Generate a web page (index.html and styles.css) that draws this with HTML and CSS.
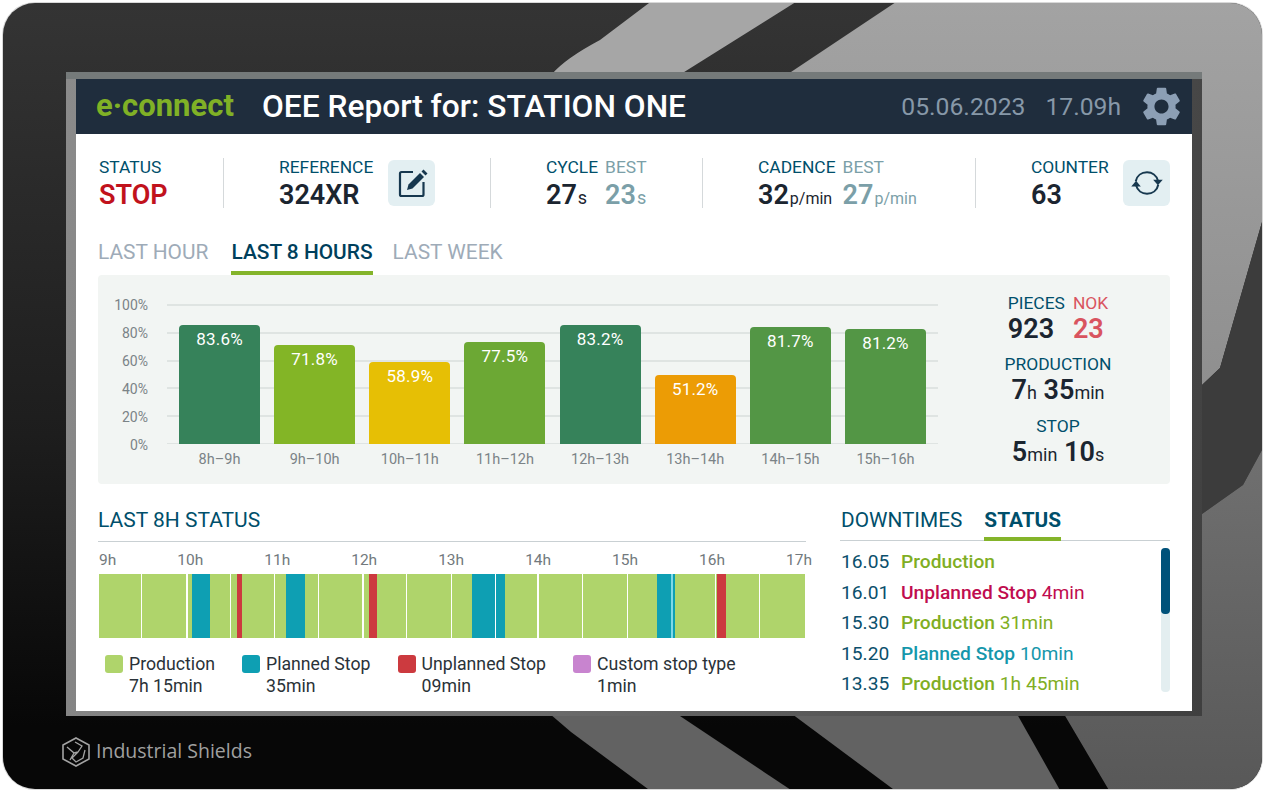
FILE: index.html
```html
<!DOCTYPE html>
<html lang="en">
<head>
    <meta charset="UTF-8">
    <meta name="viewport" content="width=device-width, initial-scale=1.0">
    <title>OEE Report</title>
    <link rel="stylesheet" href="styles.css">
</head>
<body>

<div class="device">
    <!-- panel casing with the reflections -->
    <svg class="casing" width="1266" height="791" viewBox="0 0 1266 791">
        <defs>
            <clipPath id="caseClip"><rect x="3" y="3" width="1259" height="786" rx="32"/></clipPath>
            <linearGradient id="caseDark" x1="0" y1="0" x2="0" y2="1">
                <stop offset="0" stop-color="#343434"/>
                <stop offset="0.55" stop-color="#1d1d1d"/>
                <stop offset="0.92" stop-color="#070707"/>
            </linearGradient>
            <linearGradient id="caseLight" x1="0" y1="0" x2="0" y2="1">
                <stop offset="0" stop-color="#a3a3a3"/>
                <stop offset="1" stop-color="#8f8f8f"/>
            </linearGradient>
            <linearGradient id="caseLow" x1="0" y1="0" x2="0" y2="1">
                <stop offset="0" stop-color="#707070"/>
                <stop offset="1" stop-color="#585858"/>
            </linearGradient>
        </defs>
        <rect x="2" y="2" width="1261" height="788" rx="33" fill="#d8d8d8"/>
        <g clip-path="url(#caseClip)">
            <rect x="3" y="3" width="1259" height="786" fill="url(#caseDark)"/>
            <path d="M653 0 L600 40 Q566 58 552 74 L681 74 L799 0Z" fill="#a6a6a6"/>
            <path d="M899 0 L788 74 L1202 74 L1202 385 L1220 368 L1262 222 L1262 0Z" fill="url(#caseLight)"/>
            <path d="M1202 385 L1220 368 L1262 222 L1262 450 L1243 485 L1202 514Z" fill="#3c3c3c"/>
            <path d="M1202 514 L1243 485 L1262 450 L1262 792 L1110 792 L1064 714 L1202 714Z" fill="url(#caseLow)"/>
            <path d="M1017 714 L792 714 L897 792 L1061 792Z" fill="#626262"/>
            <path d="M550 714 L677 714 L794 792 L652 792 L571 732Z" fill="#626262"/>
        </g>
        <path d="M76 738 L89 745 L89 759 L76 766 L63 759 L63 745Z" fill="none" stroke="#a3a3a3" stroke-width="1.6"/>
        <path d="M67 747 L74 753 L70 760 M75 742 L82 746 L78 752 L74 753 M85 750 L83 758 L76 762 L72 758 L78 752" fill="none" stroke="#a3a3a3" stroke-width="1.3"/>
    </svg>

    <div class="bezel">
        <div class="screen">

            <header class="topbar">
                <span class="brand">e·connect</span>
                <h1 class="title">OEE Report for: STATION ONE</h1>
                <div class="clock">
                    <span>05.06.2023</span>
                    <span>17.09h</span>
                    <svg class="gear" width="47" height="47" viewBox="0 0 24 24"><path fill="#8c9fb5" d="M19.14 12.94c.04-.3.06-.61.06-.94 0-.32-.02-.64-.07-.94l2.03-1.58c.18-.14.23-.41.12-.61l-1.92-3.32c-.12-.22-.37-.29-.59-.22l-2.39.96c-.5-.38-1.03-.7-1.62-.94l-.36-2.54c-.04-.24-.24-.41-.48-.41h-3.84c-.24 0-.43.17-.47.41l-.36 2.54c-.59.24-1.13.57-1.62.94l-2.39-.96c-.22-.08-.47 0-.59.22L2.74 8.87c-.12.21-.08.47.12.61l2.03 1.58c-.05.3-.09.63-.09.94s.02.64.07.94l-2.03 1.58c-.18.14-.23.41-.12.61l1.92 3.32c.12.22.37.29.59.22l2.39-.96c.5.38 1.03.7 1.62.94l.36 2.54c.05.24.24.41.48.41h3.84c.24 0 .44-.17.47-.41l.36-2.54c.59-.24 1.13-.56 1.62-.94l2.39.96c.22.08.47 0 .59-.22l1.92-3.32c.12-.22.07-.47-.12-.61l-2.01-1.58zM12 15.6c-1.98 0-3.6-1.62-3.6-3.6s1.62-3.6 3.6-3.6 3.6 1.62 3.6 3.6-1.62 3.6-3.6 3.6z"/></svg>
                </div>
            </header>

            <section class="stats">
                <div class="stat stat-status">
                    <div class="stat-label">STATUS</div>
                    <div class="stat-value stop">STOP</div>
                </div>
                <div class="stat stat-ref">
                    <div>
                        <div class="stat-label">REFERENCE</div>
                        <div class="stat-value">324XR</div>
                    </div>
                    <button class="icon-btn">
                        <svg width="32" height="32" viewBox="0 0 32 32" fill="none" stroke="#17384f" stroke-width="2.2"><path d="M17 5H5.500a1.500 1.500 0 0 0-1.500 1.500V27.500a1.500 1.500 0 0 0 1.500 1.500H26a1.500 1.500 0 0 0 1.500-1.500V15"/><path d="M11 23L12.500 17.500 24 6l4 4-11.500 11.500z" fill="#17384f" stroke="none"/><path d="M25.500 4.500l2-2 4 4-2 2z" fill="#17384f" stroke="none"/></svg>
                    </button>
                </div>
                <div class="stat stat-cycle">
                    <div class="pair">
                        <div>
                            <div class="stat-label">CYCLE</div>
                            <div class="stat-value">27<small>s</small></div>
                        </div>
                        <div class="best">
                            <div class="stat-label">BEST</div>
                            <div class="stat-value">23<small>s</small></div>
                        </div>
                    </div>
                </div>
                <div class="stat stat-cadence">
                    <div class="pair">
                        <div>
                            <div class="stat-label">CADENCE</div>
                            <div class="stat-value">32<small class="rate">p/min</small></div>
                        </div>
                        <div class="best">
                            <div class="stat-label">BEST</div>
                            <div class="stat-value">27<small class="rate">p/min</small></div>
                        </div>
                    </div>
                </div>
                <div class="stat stat-counter">
                    <div>
                        <div class="stat-label">COUNTER</div>
                        <div class="stat-value">63</div>
                    </div>
                    <button class="icon-btn">
                        <svg width="36" height="36" viewBox="0 0 32 32" fill="none" stroke="#17384f" stroke-width="1.8"><path d="M6 14.500C7 9.500 11 6.500 16 6.500c4.500 0 8.500 2.800 9.700 7.500"/><path d="M26 17.500C25 22.500 21 25.500 16 25.500c-4.500 0-8.500-2.800-9.700-7.500"/><path d="M21.500 13h8.500l-4.300 5z" fill="#17384f" stroke="none"/><path d="M2 19h8.500l-4.200-5z" fill="#17384f" stroke="none"/></svg>
                    </button>
                </div>
            </section>

            <nav class="tabs">
                <span class="tab">LAST HOUR</span>
                <span class="tab active">LAST 8 HOURS</span>
                <span class="tab">LAST WEEK</span>
            </nav>

            <section class="panel">
                <div class="chart">
                    <div class="y-axis">
                        <span>100%</span><span>80%</span><span>60%</span><span>40%</span><span>20%</span><span>0%</span>
                    </div>
                    <div class="plot">
                        <div class="bar dark-green" style="height:119px">83.6%</div>
                        <div class="bar lime" style="height:99px">71.8%</div>
                        <div class="bar yellow" style="height:82px">58.9%</div>
                        <div class="bar grass" style="height:102px">77.5%</div>
                        <div class="bar dark-green" style="height:119px">83.2%</div>
                        <div class="bar orange" style="height:69px">51.2%</div>
                        <div class="bar green" style="height:117px">81.7%</div>
                        <div class="bar green" style="height:115px">81.2%</div>
                    </div>
                    <div class="x-axis">
                        <span>8h–9h</span><span>9h–10h</span><span>10h–11h</span><span>11h–12h</span><span>12h–13h</span><span>13h–14h</span><span>14h–15h</span><span>15h–16h</span>
                    </div>
                </div>
                <div class="summary">
                    <div class="pair-center">
                        <div>
                            <div class="sum-label">PIECES</div>
                            <div class="sum-value">923</div>
                        </div>
                        <div class="nok">
                            <div class="sum-label">NOK</div>
                            <div class="sum-value">23</div>
                        </div>
                    </div>
                    <div class="sum-label spaced">PRODUCTION</div>
                    <div class="sum-value">7<small>h</small> 35<small>min</small></div>
                    <div class="sum-label spaced-stop">STOP</div>
                    <div class="sum-value">5<small>min</small> 10<small>s</small></div>
                </div>
            </section>

            <section class="lower">
                <div class="history">
                    <h2 class="history-title">LAST 8H STATUS</h2>
                    <div class="hours">
                        <span>9h</span><span>10h</span><span>11h</span><span>12h</span><span>13h</span><span>14h</span><span>15h</span><span>16h</span><span class="last-hour">17h</span>
                    </div>
                    <div class="timeline">
                        <i class="prod cut" style="width:43px"></i>
                        <i class="prod cut wide" style="width:45.6px"></i>
                        <i class="prod" style="width:4.7px"></i>
                        <i class="plan" style="width:18px"></i>
                        <i class="prod cut" style="width:20.7px"></i>
                        <i class="prod" style="width:5.7px"></i>
                        <i class="unpl" style="width:5.6px"></i>
                        <i class="prod cut" style="width:32.7px"></i>
                        <i class="prod" style="width:10.8px"></i>
                        <i class="plan" style="width:18.8px"></i>
                        <i class="prod cut" style="width:14.4px"></i>
                        <i class="prod cut wide" style="width:45px"></i>
                        <i class="prod" style="width:4.8px"></i>
                        <i class="unpl" style="width:8.5px"></i>
                        <i class="prod cut" style="width:29.7px"></i>
                        <i class="prod cut" style="width:45px"></i>
                        <i class="prod" style="width:19.7px"></i>
                        <i class="plan cut" style="width:24.1px"></i>
                        <i class="plan" style="width:8.9px"></i>
                        <i class="prod cut wide" style="width:34.9px"></i>
                        <i class="prod cut" style="width:43.9px"></i>
                        <i class="prod cut" style="width:44.3px"></i>
                        <i class="prod" style="width:29.8px"></i>
                        <i class="plan" style="width:13.7px"></i>
                        <i class="sky" style="width:1.9px"></i>
                        <i class="plan" style="width:1.8px"></i>
                        <i class="prod cut" style="width:41px"></i>
                        <i class="prod" style="width:1.6px"></i>
                        <i class="unpl" style="width:8.4px"></i>
                        <i class="prod cut" style="width:34px"></i>
                        <i class="prod" style="width:45px"></i>
                    </div>
                    <div class="legend">
                        <div class="legend-item">
                            <span class="swatch prod"></span>
                            <div>Production<br>7h 15min</div>
                        </div>
                        <div class="legend-item">
                            <span class="swatch plan"></span>
                            <div>Planned Stop<br>35min</div>
                        </div>
                        <div class="legend-item">
                            <span class="swatch unpl"></span>
                            <div>Unplanned Stop<br>09min</div>
                        </div>
                        <div class="legend-item">
                            <span class="swatch custom"></span>
                            <div>Custom stop type<br>1min</div>
                        </div>
                    </div>
                </div>

                <div class="events">
                    <div class="events-tabs">
                        <span class="events-tab">DOWNTIMES</span>
                        <span class="events-tab active">STATUS</span>
                    </div>
                    <div class="events-body">
                        <ul class="event-list">
                            <li><span class="time">16.05</span><span class="c-prod"><b>Production</b></span></li>
                            <li><span class="time">16.01</span><span class="c-unpl"><b>Unplanned Stop</b> 4min</span></li>
                            <li><span class="time">15.30</span><span class="c-prod"><b>Production</b> 31min</span></li>
                            <li><span class="time">15.20</span><span class="c-plan"><b>Planned Stop</b> 10min</span></li>
                            <li><span class="time">13.35</span><span class="c-prod"><b>Production</b> 1h 45min</span></li>
                        </ul>
                        <div class="scrollbar"><div class="thumb"></div></div>
                    </div>
                </div>
            </section>

        </div>
    </div>

    <div class="maker">Industrial Shields</div>
</div>

</body>
</html>
```

FILE: styles.css
```css
* {
    box-sizing: border-box;
}

body {
    margin: 0;
    background-color: #fff;
    font-family: Roboto, "Liberation Sans", sans-serif;
    overflow: hidden;
}

.device {
    position: relative;
    width: 1266px;
    height: 791px;
    padding: 72px 64px 0 66px;
}

.casing {
    position: absolute;
    top: 0;
    left: 0;
}

.bezel {
    position: relative;
    padding: 7px 10px 5px;
    background:
        linear-gradient(to bottom, #757a7a 0, #757a7a 7px, transparent 7px),
        linear-gradient(100deg, #8b8b8b 0%, #6d6d6d 45%, #3f3f3f 100%);
}

.screen {
    height: 632px;
    background-color: #fff;
}

.maker {
    position: absolute;
    left: 96px;
    top: 739px;
    font-family: "Open Sans", sans-serif;
    font-size: 19.5px;
    line-height: 24px;
    color: #a0a0a0;
}

/* top bar */
.topbar {
    display: flex;
    align-items: center;
    height: 55px;
    padding: 0 7px 0 20px;
    background-color: #1f2d3d;
}

.brand {
    width: 166px;
    margin-top: -2px;
    font-size: 31px;
    font-weight: 700;
    color: #80b126;
}

.title {
    margin: 0;
    font-size: 31.7px;
    font-weight: 500;
    color: #fff;
}

.clock {
    display: flex;
    align-items: center;
    gap: 20px;
    margin-left: auto;
    font-size: 24.7px;
    color: #8798a8;
}

.gear {
    margin-left: -3px;
}

/* stats row */
.stats {
    display: flex;
    height: 50px;
    margin: 24px 22px 0 23px;
}

.stat {
    display: flex;
    border-right: 1px solid #d5d9db;
    padding-left: 55px;
}

.stat-status {
    width: 125px;
    display: block;
    padding-left: 0;
}

.stat-ref {
    width: 267px;
}

.stat-cycle {
    width: 212px;
}

.stat-cadence {
    width: 273px;
}

.stat-counter {
    flex: 1;
    border-right: none;
}

.stat-label {
    font-size: 17.4px;
    line-height: 18px;
    color: #004f6b;
}

.stat-value {
    margin-top: 3px;
    font-size: 27px;
    line-height: 32px;
    font-weight: 600;
    color: #1b2530;
}

.stat-value small {
    font-size: 18px;
    font-weight: 400;
    margin-left: 1px;
}

.stat-value small.rate {
    font-size: 16px;
}

.stat-value.stop {
    color: #c1121c;
}

.pair {
    display: flex;
    gap: 7px;
}

.best .stat-label {
    color: #7b9fa8;
}

.best .stat-value {
    color: #7b9fa8;
}

.icon-btn {
    display: flex;
    align-items: center;
    justify-content: center;
    width: 47px;
    height: 46px;
    margin: 2px 0 0 15px;
    padding: 0;
    border: none;
    border-radius: 6px;
    background-color: #e3eff2;
}

.stat-counter .icon-btn {
    margin-left: auto;
}

/* tabs */
.tabs {
    display: flex;
    gap: 20px;
    margin: 30px 0 0 22px;
}

.tab {
    padding-bottom: 5px;
    border-bottom: 4px solid transparent;
    font-size: 20.9px;
    line-height: 28px;
    color: #9eabb8;
}

.tab.active {
    margin-left: 3px;
    border-bottom-color: #84b42a;
    color: #003f5c;
    font-weight: 500;
}

/* chart panel */
.panel {
    display: flex;
    justify-content: space-between;
    height: 209px;
    margin: 0 22px;
    padding: 29px 12px 0 0;
    border-radius: 4px;
    background-color: #f2f5f3;
}

.chart {
    display: grid;
    grid-template-columns: 50px 771px;
    grid-template-rows: 140px auto;
    column-gap: 19px;
}

.y-axis {
    grid-row: 1;
    display: flex;
    flex-direction: column;
    justify-content: space-between;
    align-items: flex-end;
    height: 156px;
    margin-top: -7px;
    font-size: 14px;
    line-height: 16px;
    color: #7b8387;
}

.plot {
    display: flex;
    align-items: flex-end;
    gap: 14.15px;
    padding-left: 12px;
    background-image: repeating-linear-gradient(to bottom, #dfe4e2 0, #dfe4e2 2px, transparent 2px, transparent 27.8px);
}

.bar {
    width: 81px;
    padding-top: 4px;
    border-radius: 4px 4px 0 0;
    font-size: 17px;
    line-height: 20px;
    letter-spacing: 0.2px;
    text-align: center;
    color: #fff;
}

.dark-green { background-color: #36825a; }
.green { background-color: #539645; }
.grass { background-color: #6ca834; }
.lime { background-color: #83b526; }
.yellow { background-color: #e6bf05; }
.orange { background-color: #ec9c05; }

.x-axis {
    grid-column: 2;
    display: flex;
    gap: 14.15px;
    padding-left: 12px;
    margin-top: 7px;
    font-size: 14.5px;
    line-height: 18px;
    color: #7b8387;
}

.x-axis span {
    width: 81px;
    text-align: center;
}

/* figures next to the chart */
.summary {
    display: flex;
    flex-direction: column;
    align-items: center;
    width: 200px;
    margin-top: -10px;
}

.pair-center {
    display: flex;
    gap: 8px;
}

.sum-label {
    font-size: 17.4px;
    line-height: 18px;
    color: #004f6b;
}

.sum-label.spaced {
    margin-top: 9px;
}

.sum-label.spaced-stop {
    margin-top: 7px;
}

.sum-value {
    font-size: 27px;
    line-height: 34px;
    font-weight: 600;
    color: #1b2530;
}

.sum-value small {
    font-size: 18px;
    font-weight: 400;
}

.nok .sum-label,
.nok .sum-value {
    color: #d9545f;
}

/* lower part */
.lower {
    display: flex;
    gap: 34px;
    margin: 23px 22px 0;
}

.history {
    width: 708px;
}

.history-title {
    margin: 0;
    padding-bottom: 8px;
    border-bottom: 1px solid #c9d0d3;
    font-size: 21px;
    line-height: 26px;
    font-weight: 400;
    color: #004f6b;
}

.hours {
    display: flex;
    gap: 61px;
    margin: 9px 1px 0;
    font-size: 15.5px;
    line-height: 18px;
    color: #72797d;
}

.last-hour {
    margin-left: auto;
}

.timeline {
    display: flex;
    height: 64px;
    margin: 5px 1px 0;
}

.timeline i {
    flex: none;
    display: block;
}

.timeline .cut {
    border-right: 1.5px solid #fff;
}

.timeline .cut.wide {
    border-right-width: 2.5px;
}

.prod { background-color: #afd46b; }
.plan { background-color: #0e9fb3; }
.unpl { background-color: #cc3a3f; }
.sky { background-color: #7fd8e8; }
.custom { background-color: #c884cf; }

.legend {
    display: flex;
    gap: 27px;
    margin: 15px 0 0 7px;
}

.legend-item {
    display: flex;
    gap: 6px;
    font-size: 17.7px;
    line-height: 22px;
    color: #2a3238;
}

.swatch {
    flex: none;
    width: 18px;
    height: 18px;
    margin-top: 2px;
    border-radius: 3px;
}

/* events list */
.events {
    flex: 1;
}

.events-tabs {
    display: flex;
    gap: 22px;
    padding-left: 1px;
    border-bottom: 1px solid #c9d0d3;
}

.events-tab {
    padding-bottom: 4px;
    border-bottom: 4px solid transparent;
    margin-bottom: -1px;
    font-size: 20.8px;
    line-height: 26px;
    color: #004f6b;
}

.events-tab.active {
    border-bottom-color: #84b42a;
    font-weight: 700;
}

.events-body {
    display: flex;
    justify-content: space-between;
}

.event-list {
    margin: 6px 0 0 1px;
    padding: 0;
    list-style: none;
    font-size: 19.2px;
    line-height: 30.5px;
}

.event-list li {
    display: flex;
}

.event-list b {
    font-weight: 500;
}

.time {
    width: 60px;
    color: #0b4f6c;
}

.c-prod { color: #7fae24; }
.c-unpl { color: #c00d4f; }
.c-plan { color: #1597ab; }

.scrollbar {
    width: 9px;
    height: 144px;
    margin-top: 7px;
    border-radius: 4px;
    background-color: #e3eef0;
}

.thumb {
    height: 66px;
    border-radius: 4px;
    background-color: #00527a;
}
```
